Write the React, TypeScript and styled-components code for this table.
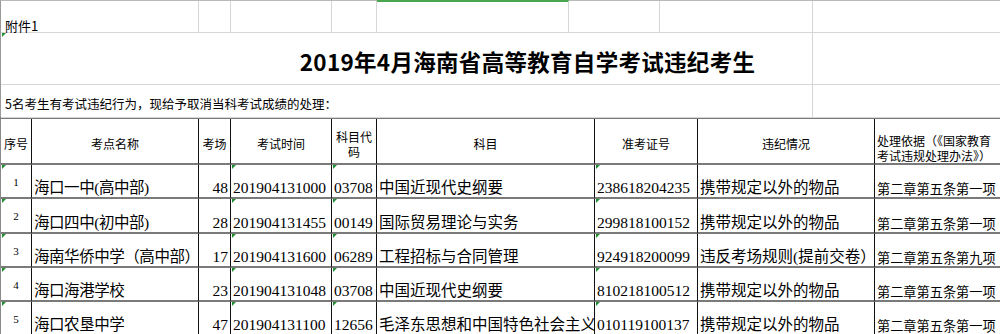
import React from "react";
import styled, { createGlobalStyle, css } from "styled-components";

const GlobalStyle = createGlobalStyle`
  html, body { margin: 0; padding: 0; background: #ffffff; }
  body { font-family: "Liberation Serif", "Noto Sans CJK SC", serif; color: #000; }
`;

const Sheet = styled.div`
  width: 1000px;
  height: 334px;
  overflow: hidden;
  background: #fff;
`;

const TopGrid = styled.div`
  display: grid;
  grid-template-columns: 31px 167px 32px 101px 45px 192px 91px 153px 188px;
  grid-template-rows: 32px 52px 33px;
  border-top: 1px solid #b9b9b9;
  border-left: 1px solid #9a9a9a;
`;

const GridCell = styled.div<{ $span?: number; $selected?: boolean; $flag?: boolean }>`
  position: relative;
  grid-column: span ${(p) => p.$span ?? 1};
  border-right: 1px solid #d6d6d6;
  border-bottom: 1px solid #d6d6d6;
  box-sizing: border-box;
  min-width: 0;
  ${(p) =>
    p.$selected &&
    css`
      border-top: 2px solid #4aa64f;
      margin-top: -1px;
    `}
  ${(p) =>
    p.$flag &&
    css`
      &::before {
        content: "";
        position: absolute;
        left: 1px;
        top: 0;
        border-top: 4px solid #1f8f32;
        border-right: 4px solid transparent;
      }
    `}
`;

const NoteText = styled.div`
  font-family: "Noto Sans CJK SC", sans-serif;
  font-size: 13px;
  line-height: 1;
  padding: 18px 0 0 4px;
  white-space: nowrap;
`;

const TitleText = styled.div`
  display: flex;
  justify-content: center;
  align-items: center;
  height: 100%;
  padding: 5px 0 0 242px;
  box-sizing: border-box;
  font-family: "Noto Sans CJK SC", sans-serif;
  font-weight: 700;
  font-size: 22.5px;
  letter-spacing: 0.3px;
  white-space: nowrap;
`;

const IntroText = styled.div`
  display: flex;
  align-items: center;
  height: 100%;
  padding: 2px 0 0 4px;
  font-family: "Noto Sans CJK SC", sans-serif;
  font-size: 12.5px;
  white-space: nowrap;
`;

const COLS = "31px 167px 32px 101px 45px 218px 103px 177px 126px";

const Table = styled.div`
  display: grid;
  grid-template-columns: ${COLS};
  border-top: 2px solid #7a7a7a;
  border-left: 1px solid #8a8a8a;
  margin-top: -1px;
`;

const HeadCell = styled.div<{ $align?: "left" | "center"; $bottom?: boolean; $last?: boolean }>`
  height: 46px;
  box-sizing: border-box;
  border-right: 1px solid ${(p) => (p.$last ? "#c8c8c8" : "#111")};
  border-bottom: 2px solid #7a7a7a;
  display: flex;
  align-items: ${(p) => (p.$bottom ? "flex-end" : "center")};
  justify-content: ${(p) => (p.$align === "left" ? "flex-start" : "center")};
  text-align: ${(p) => p.$align ?? "center"};
  padding: ${(p) => (p.$bottom ? "0 0 0 2px" : "5px 1px 0 1px")};
  font-family: "Noto Sans CJK SC", sans-serif;
  font-size: 12px;
  line-height: 15px;
  overflow: hidden;
  min-width: 0;
`;

type Align = "left" | "right" | "center" | "top";

const DataCell = styled.div<{ $h: number; $align: Align; $size: number; $flag?: boolean; $last?: boolean; $tight?: boolean }>`
  position: relative;
  height: ${(p) => p.$h}px;
  box-sizing: border-box;
  border-right: 1px solid ${(p) => (p.$last ? "#c8c8c8" : "#111")};
  border-bottom: 2px solid #7a7a7a;
  display: flex;
  align-items: ${(p) => (p.$align === "top" ? "flex-start" : "flex-end")};
  justify-content: ${(p) =>
    p.$align === "right" ? "flex-end" : p.$align === "left" ? "flex-start" : "center"};
  padding: ${(p) => (p.$align === "top" ? "11px 0 0 0" : p.$align === "right" ? "0 2px 0 0" : "0 0 0 2px")};
  font-size: ${(p) => p.$size}px;
  letter-spacing: ${(p) => (p.$tight ? "-0.45px" : "0")};
  line-height: 1.15;
  white-space: nowrap;
  overflow: hidden;
  min-width: 0;
  ${(p) =>
    p.$flag &&
    css`
      &::before {
        content: "";
        position: absolute;
        left: 1px;
        top: 0;
        border-top: 4px solid #1f8f32;
        border-right: 4px solid transparent;
      }
    `}
`;

const headers: { label: React.ReactNode; align?: "left" | "center"; bottom?: boolean }[] = [
  { label: "序号" },
  { label: "考点名称" },
  { label: "考场" },
  { label: "考试时间" },
  { label: <>科目代<br />码</> },
  { label: "科目" },
  { label: "准考证号" },
  { label: "违纪情况" },
  { label: <>处理依据（《国家教育<br />考试违规处理办法》）</>, align: "left", bottom: true },
];

const colSpec: { align: Align; size: number; flag?: boolean; tight?: boolean }[] = [
  { align: "top", size: 11, flag: true },
  { align: "left", size: 15.5, tight: true },
  { align: "right", size: 15.5 },
  { align: "left", size: 15.5, flag: true },
  { align: "left", size: 15.5, flag: true },
  { align: "left", size: 15.5 },
  { align: "left", size: 15.5, flag: true },
  { align: "left", size: 15.5 },
  { align: "left", size: 13.2 },
];

const rows: { h: number; cells: string[] }[] = [
  { h: 34, cells: ["1", "海口一中(高中部)", "48", "201904131000", "03708", "中国近现代史纲要", "238618204235", "携带规定以外的物品", "第二章第五条第一项"] },
  { h: 35, cells: ["2", "海口四中(初中部)", "28", "201904131455", "00149", "国际贸易理论与实务", "299818100152", "携带规定以外的物品", "第二章第五条第一项"] },
  { h: 34, cells: ["3", "海南华侨中学（高中部）", "17", "201904131600", "06289", "工程招标与合同管理", "924918200099", "违反考场规则(提前交卷）", "第二章第五条第九项"] },
  { h: 34, cells: ["4", "海口海港学校", "23", "201904131048", "03708", "中国近现代史纲要", "810218100512", "携带规定以外的物品", "第二章第五条第一项"] },
  { h: 34, cells: ["5", "海口农垦中学", "47", "201904131100", "12656", "毛泽东思想和中国特色社会主义", "010119100137", "携带规定以外的物品", "第二章第五条第一项"] },
];

export default function App() {
  return (
    <>
      <GlobalStyle />
      <Sheet>
        <TopGrid>
          <GridCell $span={2}>
            <NoteText>附件1</NoteText>
          </GridCell>
          <GridCell />
          <GridCell />
          <GridCell />
          <GridCell $selected />
          <GridCell />
          <GridCell />
          <GridCell />
          <GridCell $span={8} $flag>
            <TitleText>2019年4月海南省高等教育自学考试违纪考生</TitleText>
          </GridCell>
          <GridCell />
          <GridCell $span={8}>
            <IntroText>5名考生有考试违纪行为，现给予取消当科考试成绩的处理：</IntroText>
          </GridCell>
          <GridCell />
        </TopGrid>
        <Table>
          {headers.map((h, i) => (
            <HeadCell key={i} $align={h.align} $bottom={h.bottom} $last={i === headers.length - 1}>
              <span>{h.label}</span>
            </HeadCell>
          ))}
          {rows.map((r, ri) =>
            r.cells.map((c, ci) => (
              <DataCell
                key={`${ri}-${ci}`}
                $h={r.h}
                $align={colSpec[ci].align}
                $size={colSpec[ci].size}
                $flag={colSpec[ci].flag}
                $tight={colSpec[ci].tight}
                $last={ci === colSpec.length - 1}
              >
                {c}
              </DataCell>
            ))
          )}
        </Table>
      </Sheet>
    </>
  );
}
